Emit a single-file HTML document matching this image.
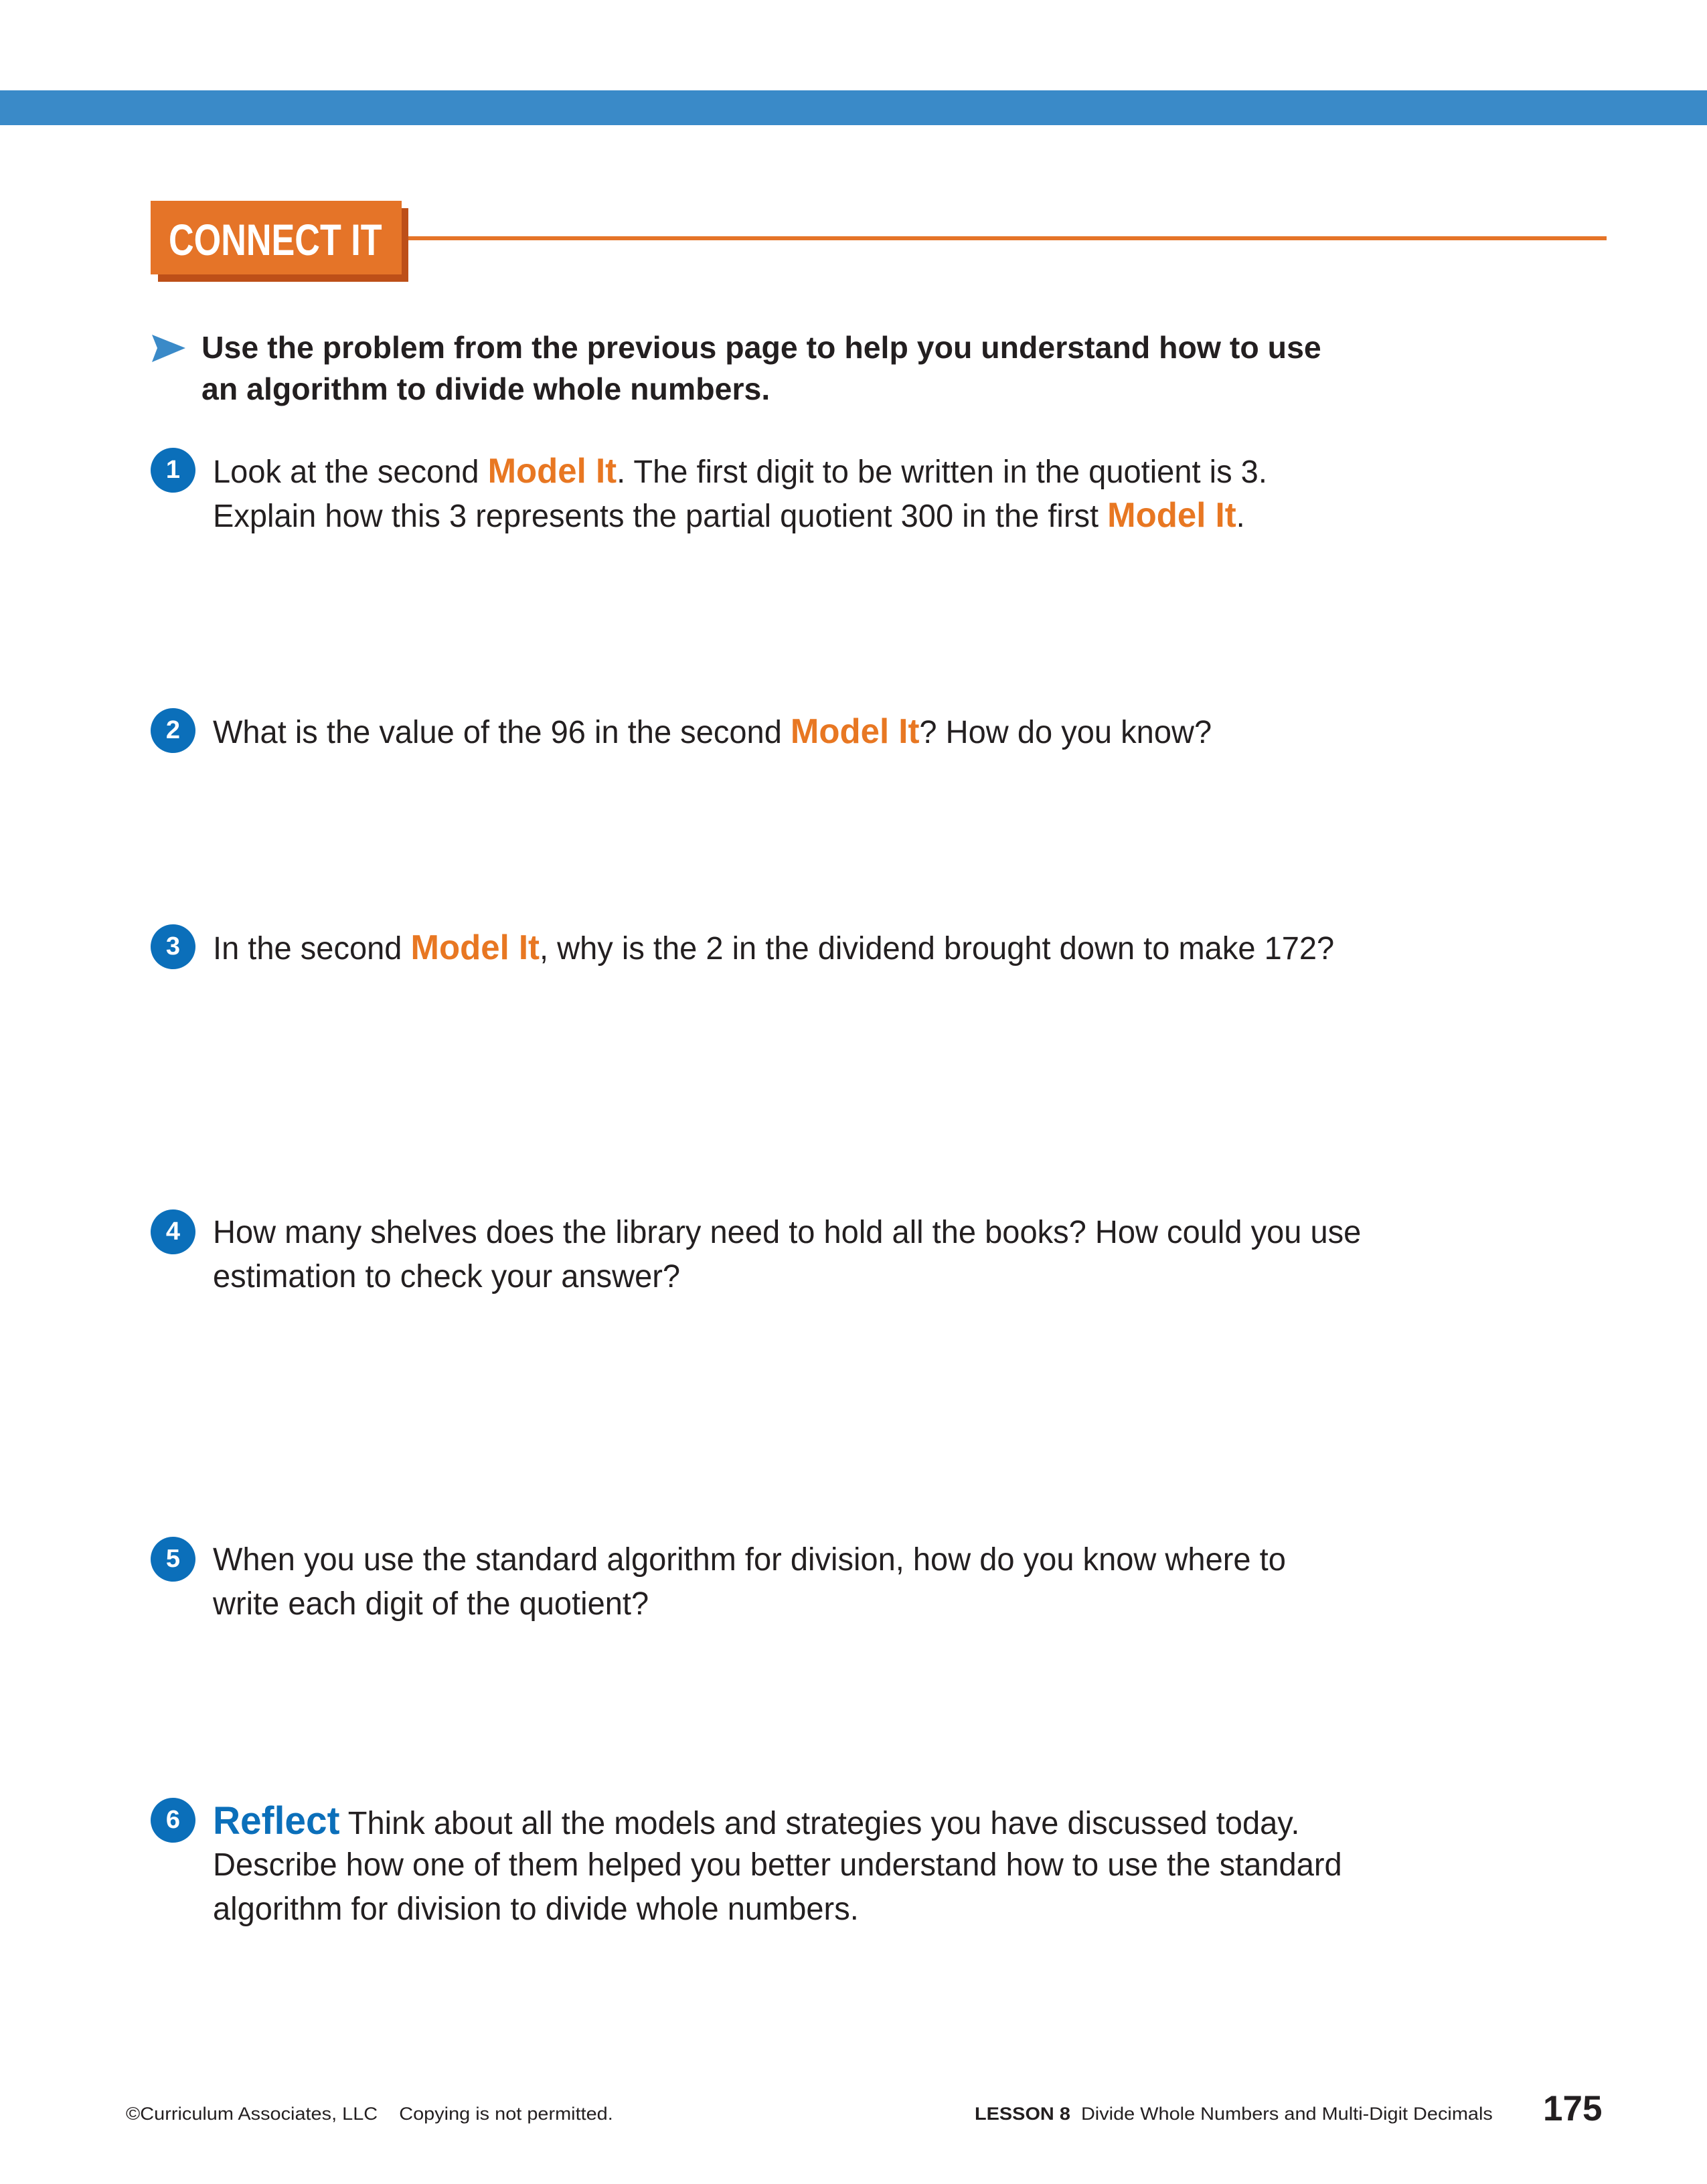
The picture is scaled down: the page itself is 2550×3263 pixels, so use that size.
<!DOCTYPE html>
<html><head><meta charset="utf-8"><style>
html,body{margin:0;padding:0;background:#fff;}
body{width:2550px;height:3263px;position:relative;overflow:hidden;font-family:"Liberation Sans",sans-serif;color:#231f20;}
.abs{position:absolute;white-space:nowrap;}
.ln{position:absolute;left:318px;white-space:nowrap;font-size:48px;line-height:48px;transform:scaleX(0.98);transform-origin:0 0;}
.mi{color:#e87722;font-weight:bold;font-size:52px;}
.c{position:absolute;left:225px;width:67px;height:67px;border-radius:50%;background:#0b6fba;color:#fff;font-weight:bold;font-size:38px;line-height:67px;text-align:center;}
.hd{position:absolute;left:301px;white-space:nowrap;font-weight:bold;font-size:46px;line-height:46px;transform:scaleX(1.01);transform-origin:0 0;}
</style></head><body>
<div class="abs" style="left:0;top:135px;width:2550px;height:52px;background:#3a8ac8;"></div>
<div class="abs" style="left:236px;top:311px;width:374px;height:110px;background:#bd4f18;"></div>
<div class="abs" style="left:225px;top:300px;width:375px;height:110px;background:#e57428;"></div>
<div class="abs" style="left:610px;top:353px;width:1790px;height:6px;background:#e57428;"></div>
<div class="abs" style="left:252px;top:325px;color:#fff;font-weight:bold;font-size:66px;line-height:66px;transform:scaleX(0.79);transform-origin:0 0;">CONNECT IT</div>
<svg class="abs" style="left:227px;top:500px" width="50" height="41" viewBox="0 0 50 41"><path d="M0 0 L50 20 L0 41 L8 20 Z" fill="#3a8ac8"/></svg>
<div class="hd" style="top:496px">Use the problem from the previous page to help you understand how to use</div>
<div class="hd" style="top:558px">an algorithm to divide whole numbers.</div>

<div class="c" style="top:669px">1</div>
<div class="ln" style="top:680px">Look at the second <span class="mi">Model It</span>. The first digit to be written in the quotient is 3.</div>
<div class="ln" style="top:746px">Explain how this 3 represents the partial quotient 300 in the first <span class="mi">Model It</span>.</div>

<div class="c" style="top:1058px">2</div>
<div class="ln" style="top:1069px">What is the value of the 96 in the second <span class="mi">Model It</span>? How do you know?</div>

<div class="c" style="top:1381px">3</div>
<div class="ln" style="top:1392px">In the second <span class="mi">Model It</span>, why is the 2 in the dividend brought down to make 172?</div>

<div class="c" style="top:1807px">4</div>
<div class="ln" style="top:1818px">How many shelves does the library need to hold all the books? How could you use</div>
<div class="ln" style="top:1884px">estimation to check your answer?</div>

<div class="c" style="top:2296px">5</div>
<div class="ln" style="top:2307px">When you use the standard algorithm for division, how do you know where to</div>
<div class="ln" style="top:2373px">write each digit of the quotient?</div>

<div class="c" style="top:2686px">6</div>
<div class="ln" style="top:2697px"><span style="color:#0b6fba;font-weight:bold;font-size:58px;">Reflect</span> Think about all the models and strategies you have discussed today.</div>
<div class="ln" style="top:2763px">Describe how one of them helped you better understand how to use the standard</div>
<div class="ln" style="top:2829px">algorithm for division to divide whole numbers.</div>

<div class="abs" style="left:188px;top:3145px;font-size:27px;line-height:27px;transform:scaleX(1.07);transform-origin:0 0;">©Curriculum Associates, LLC&nbsp;&nbsp;&nbsp; Copying is not permitted.</div>
<div class="abs" style="left:1456px;top:3145px;font-size:27px;line-height:27px;transform:scaleX(1.07);transform-origin:0 0;"><b>LESSON 8</b>&nbsp; Divide Whole Numbers and Multi-Digit Decimals</div>
<div class="abs" style="left:2305px;top:3124px;font-size:53px;line-height:53px;font-weight:bold;">175</div>
</body></html>
